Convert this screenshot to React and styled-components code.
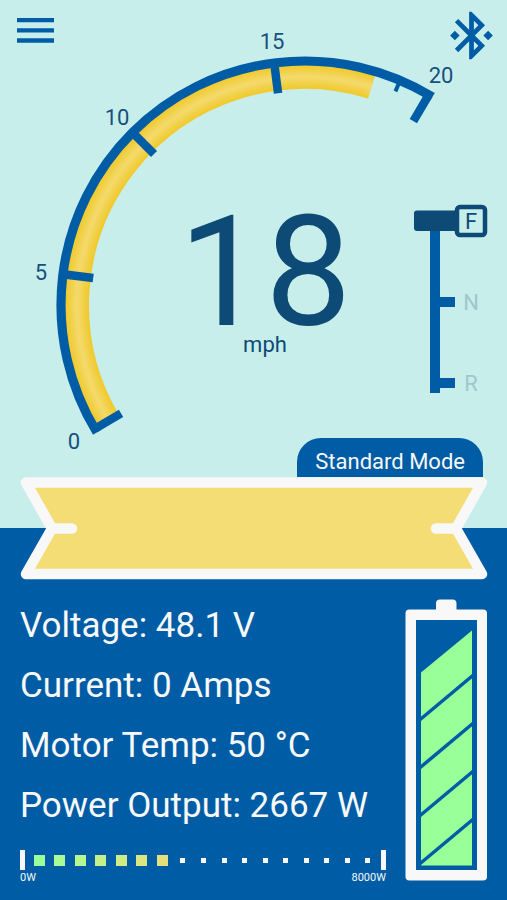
import React, { useState } from "react";
import styled, { createGlobalStyle } from "styled-components";
import { MdBluetoothConnected } from "react-icons/md";

const MAX_SPEED = 20;
const MAX_POWER = 8000;
const CELL_COUNT = 17;

// colors of the lit power cells, from low to high
const cellColors = ["#99ff99", "#a8fb95", "#b8f68f", "#c4f08a", "#cfec86", "#dce681", "#e6e07b"];

const stats = {
  speed: 18,
  needle: 18.21,
  voltage: 48.1,
  current: 0,
  temp: 50,
  power: 2667,
};

// ---------- speed dial ----------

const CX = 305;
const CY = 305;
const START = 210.5;
const SPAN = 151;

// 0 mph sits a bit below the left side, the scale runs clockwise
const point = (speed, r) => {
  const deg = START - (speed / MAX_SPEED) * SPAN;
  const rad = (deg * Math.PI) / 180;
  return [CX + r * Math.cos(rad), CY - r * Math.sin(rad)];
};

const arc = (from, to, r) => {
  const [x1, y1] = point(from, r);
  const [x2, y2] = point(to, r);
  return `M${x1} ${y1} A${r} ${r} 0 0 1 ${x2} ${y2}`;
};

const dialLabels = [
  { value: 0, x: 74, y: 449 },
  { value: 5, x: 41, y: 280 },
  { value: 10, x: 117, y: 125 },
  { value: 15, x: 272, y: 49 },
  { value: 20, x: 441, y: 83 },
];

const Tick = ({ speed, inner, width }) => {
  const [x1, y1] = point(speed, 244);
  const [x2, y2] = point(speed, inner);
  return <line x1={x1} y1={y1} x2={x2} y2={y2} stroke="#005da5" strokeWidth={width} />;
};

const SpeedDial = ({ speed }) => {
  const minor = Array.from({ length: MAX_SPEED }, (_, i) => i).filter((i) => i % 5 !== 0);

  return (
    <DialSvg viewBox="0 0 507 477" role="img" aria-label="Speed dial">
      <defs>
        <radialGradient id="band" gradientUnits="userSpaceOnUse" cx={CX} cy={CY} r="240">
          <stop offset="0.9" stopColor="#f0c929" />
          <stop offset="0.93" stopColor="#f2d352" />
          <stop offset="0.95" stopColor="#f4da6c" />
          <stop offset="0.97" stopColor="#f2d352" />
          <stop offset="1" stopColor="#f0c929" />
        </radialGradient>
      </defs>
      {minor.map((i) => (
        <Tick key={i} speed={i} inner={232} width={4} />
      ))}
      <path d={arc(0, speed, 228)} fill="none" stroke="url(#band)" strokeWidth="24" />
      <path d={arc(-0.13, 20.13, 244)} fill="none" stroke="#005da5" strokeWidth="9.2" />
      {[0, 5, 10, 15, 20].map((i) => (
        <Tick key={i} speed={i} inner={213.5} width={8.5} />
      ))}
      {dialLabels.map((l) => (
        <DialLabel key={l.value} x={l.x} y={l.y}>
          {l.value}
        </DialLabel>
      ))}
    </DialSvg>
  );
};

// ---------- gear lever ----------

const GearLever = () => (
  <GearSvg viewBox="0 0 74 200" role="img" aria-label="Gear: forward">
    <path d="M16 20h10v73h15v10H26v71h15v10H26v5H16z" fill="#005da5" />
    <rect x="0" y="6.5" width="48" height="20.5" rx="3" fill="#0d4a75" />
    <rect x="43" y="3" width="28" height="28" rx="3" fill="#c7eeeb" stroke="#0d4a75" strokeWidth="4.5" />
    <GearLabel x="57" y="25" $active>F</GearLabel>
    <GearLabel x="57" y="106">N</GearLabel>
    <GearLabel x="57" y="187">R</GearLabel>
  </GearSvg>
);

// ---------- ribbon ----------

const Ribbon = () => (
  <RibbonSvg viewBox="0 0 507 102" aria-hidden="true">
    <path
      d="M26 5.5H482L456 51.5L482 97H26L52 51.5Z"
      fill="#f4dd74"
      stroke="#f8f8f8"
      strokeWidth="10.5"
      strokeLinejoin="round"
    />
    <path d="M52 51.5H72M456 51.5H436" stroke="#f8f8f8" strokeWidth="10.5" strokeLinecap="round" />
  </RibbonSvg>
);

// ---------- battery ----------

const Battery = () => (
  <BatterySvg viewBox="0 0 82 282" role="img" aria-label="Battery level">
    <rect x="31" y="0.5" width="20.5" height="16" rx="4" fill="#f8f8f8" />
    <rect x="0.5" y="10.5" width="81.5" height="271" rx="4" fill="#f8f8f8" />
    <rect x="11" y="21" width="61" height="250" fill="#005da5" />
    <path d="M16 73.5L67 31.5V266.5H16Z" fill="#99ff99" />
    <path
      d="M14 121.5L69 75.5M14 169.5L69 123.5M14 217.5L69 171.5M14 265.5L69 219.5"
      stroke="#005da5"
      strokeWidth="3.5"
    />
  </BatterySvg>
);

const PowerBar = ({ power }) => {
  // one cell is lit for every started step of power
  const lit = Math.ceil((power / MAX_POWER) * (CELL_COUNT + 1));

  return (
    <div>
      <PowerTrack role="meter" aria-label="Power output" aria-valuemin={0} aria-valuemax={MAX_POWER} aria-valuenow={power}>
        <PowerEnd />
        <PowerCells>
          {Array.from({ length: CELL_COUNT }, (_, i) => (
            <PowerCell key={i} $color={i < lit ? cellColors[i] || "#e6e07b" : null} />
          ))}
        </PowerCells>
        <PowerEnd />
      </PowerTrack>
      <PowerScale>
        <span>0W</span>
        <span>{MAX_POWER}W</span>
      </PowerScale>
    </div>
  );
};

const App = () => {
  const [menuOpen, setMenuOpen] = useState(false);
  const lines = [
    `Voltage: ${stats.voltage} V`,
    `Current: ${stats.current} Amps`,
    `Motor Temp: ${stats.temp} °C`,
    `Power Output: ${stats.power} W`,
  ];

  return (
    <Page>
      <GlobalStyle />
      <Cluster>
        <SpeedDial speed={stats.needle} />
        <Readings>
          <Readout>
            <Speed>{stats.speed}</Speed>
            <Unit>mph</Unit>
          </Readout>
          <GearLever />
        </Readings>
        <ModeTab type="button">Standard Mode</ModeTab>
        <Header>
          <MenuButton
            type="button"
            aria-label="Menu"
            aria-expanded={menuOpen}
            onClick={() => setMenuOpen(!menuOpen)}
          >
            <svg width="37" height="25" viewBox="0 0 37 25">
              <path d="M0 2.2H37M0 12.4H37M0 22.5H37" stroke="#005da5" strokeWidth="4.3" />
            </svg>
          </MenuButton>
          <IconButton type="button" aria-label="Bluetooth">
            <MdBluetoothConnected size={57} />
          </IconButton>
        </Header>
      </Cluster>
      <RibbonRow>
        <Ribbon />
      </RibbonRow>
      <Details>
        <DetailsColumn>
          <StatList>
            {lines.map((line) => (
              <Stat key={line}>{line}</Stat>
            ))}
          </StatList>
          <PowerBar power={stats.power} />
        </DetailsColumn>
        <Battery />
      </Details>
    </Page>
  );
};

const GlobalStyle = createGlobalStyle`
  * {
    box-sizing: border-box;
  }
  body {
    margin: 0;
    background-color: #005da5;
    font-family: Roboto, "Liberation Sans", sans-serif;
  }
  svg {
    display: block;
  }
`;

const Page = styled.main`
  display: flex;
  flex-direction: column;
  min-height: 100vh;
`;

/* dial, readings, tab and header share one cell */
const Cluster = styled.section`
  display: grid;
  grid-template-columns: 1fr;
  background-color: #c7eeeb;

  > * {
    grid-area: 1 / 1;
  }
`;

const Header = styled.header`
  display: flex;
  align-items: flex-start;
  align-self: start;
  justify-content: space-between;
  padding: 7px;
`;

const IconButton = styled.button`
  padding: 0;
  border: none;
  background: none;
  color: #005da5;
  cursor: pointer;
`;

const MenuButton = styled(IconButton)`
  padding: 11px 10px;
`;

const DialSvg = styled.svg`
  width: 100%;
  height: auto;
`;

const DialLabel = styled.text`
  fill: #17507d;
  font-size: 22px;
  text-anchor: middle;
`;

const Readings = styled.div`
  display: flex;
  align-items: flex-start;
  padding: 204px 19px 0 116px;
`;

const Readout = styled.div`
  flex: 1;
  padding-top: 9px;
  color: #0d4a75;
  text-align: center;
`;

const Speed = styled.div`
  font-size: 154px;
  line-height: 120px;
`;

const Unit = styled.div`
  font-size: 22px;
  line-height: 24px;
`;

const GearSvg = styled.svg`
  width: 74px;
  height: 200px;
`;

const GearLabel = styled.text`
  fill: ${(props) => (props.$active ? "#0d4a75" : "#9fc7cc")};
  font-size: 22px;
  text-anchor: middle;
`;

const ModeTab = styled.button`
  align-self: end;
  justify-self: end;
  height: 39px;
  margin-right: 24px;
  padding: 8px 18px 0;
  border: none;
  border-radius: 24px 24px 0 0;
  background-color: #005da5;
  color: #f8f8f8;
  font-family: inherit;
  font-size: 22px;
  line-height: 26px;
  cursor: pointer;
`;

const RibbonRow = styled.div`
  background: linear-gradient(to bottom, #c7eeeb 50%, #005da5 50%);
`;

const RibbonSvg = styled.svg`
  width: 100%;
  height: auto;
  overflow: visible;
`;

const Details = styled.section`
  display: flex;
  align-items: flex-start;
  gap: 19px;
  padding: 20px 20px 0;
  color: #f8f8f8;
`;

const DetailsColumn = styled.div`
  flex: 1;
  display: flex;
  flex-direction: column;
  gap: 18px;
`;

const StatList = styled.ul`
  display: flex;
  flex-direction: column;
  gap: 8px;
  margin: 0;
  padding: 1px 0 0;
  list-style: none;
`;

const Stat = styled.li`
  font-size: 35px;
  line-height: 52px;
  white-space: nowrap;
`;

const PowerTrack = styled.div`
  display: flex;
  align-items: center;
`;

const PowerEnd = styled.span`
  width: 5px;
  height: 20px;
  background-color: #f8f8f8;
`;

const PowerCells = styled.div`
  flex: 1;
  display: grid;
  grid-template-columns: repeat(17, 1fr);
  align-items: center;
  justify-items: center;
  padding: 0 3px 0 4px;
`;

const PowerCell = styled.span`
  width: ${(props) => (props.$color ? "11px" : "5px")};
  height: ${(props) => (props.$color ? "11px" : "5px")};
  background-color: ${(props) => props.$color || "#f8f8f8"};
`;

const PowerScale = styled.div`
  display: flex;
  justify-content: space-between;
  font-size: 11px;
  line-height: 16px;
`;

const BatterySvg = styled.svg`
  flex: none;
  width: 82px;
  height: 282px;
`;

export default App;
